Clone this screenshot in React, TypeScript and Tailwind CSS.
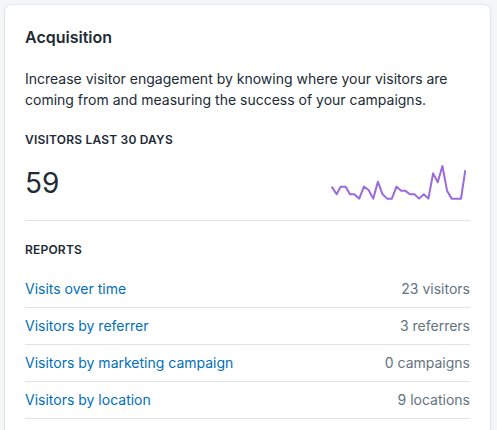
import React from "react";

const points: [number, number][] = [
  [95, 140], [110, 163], [122, 140], [137, 140], [150, 163], [163, 163], [178, 176], [192, 140],
  [206, 150], [220, 176], [234, 125], [248, 163], [262, 176], [276, 176], [290, 140], [304, 152],
  [316, 152], [330, 163], [344, 163], [358, 176], [372, 163], [386, 176], [400, 100], [414, 127],
  [428, 78], [442, 152], [456, 176], [470, 176], [484, 176], [497, 90],
];

const reports = [
  { label: "Visits over time", value: "23 visitors" },
  { label: "Visitors by referrer", value: "3 referrers" },
  { label: "Visitors by marketing campaign", value: "0 campaigns" },
  { label: "Visitors by location", value: "9 locations" },
];

function Sparkline() {
  return (
    <svg width="135" height="36" viewBox="93 72 406 108" className="mr-1 shrink-0">
      <polyline
        points={points.map(([x, y]) => `${x},${y}`).join(" ")}
        fill="none"
        stroke="#9c6ade"
        strokeWidth="2"
        strokeLinejoin="round"
        vectorEffect="non-scaling-stroke"
      />
    </svg>
  );
}

export default function App() {
  return (
    <div className="min-h-[430px] bg-[#f4f6f8] pt-[5px] pl-[5px] pr-[7px] overflow-hidden" style={{ fontFamily: "Inter, 'Noto Sans', sans-serif" }}>
      <div className="h-[440px] rounded-[6px] bg-white shadow-[0_0_0_1px_rgba(63,63,68,0.05),0_1px_3px_0_rgba(63,63,68,0.15)] px-5 pt-5 text-[#212b36]">
        <h2 className="text-[16px] leading-6 font-semibold">Acquisition</h2>

        <p className="mt-[19px] text-[14px] leading-[21px]">
          Increase visitor engagement by knowing where your visitors are coming from and measuring the success of your campaigns.
        </p>

        <div className="mt-[22px] text-[12px] leading-4 font-semibold uppercase tracking-[0.2px]">Visitors last 30 days</div>

        <div className="mt-[16px] flex items-end justify-between border-b border-[#dfe3e8] pb-[20px]">
          <div className="text-[28px] leading-8 mb-px">59</div>
          <Sparkline />
        </div>

        <div className="mt-[21px] text-[12px] leading-4 font-semibold uppercase tracking-[0.2px]">Reports</div>

        <ul className="mt-[13px]">
          {reports.map((r) => (
            <li key={r.label} className="flex h-[37px] items-center justify-between border-b border-[#dfe3e8] text-[14px] pb-px">
              <a href="#" className="text-[#006fbb]">{r.label}</a>
              <span className="text-[#637381]">{r.value}</span>
            </li>
          ))}
        </ul>
      </div>
    </div>
  );
}
